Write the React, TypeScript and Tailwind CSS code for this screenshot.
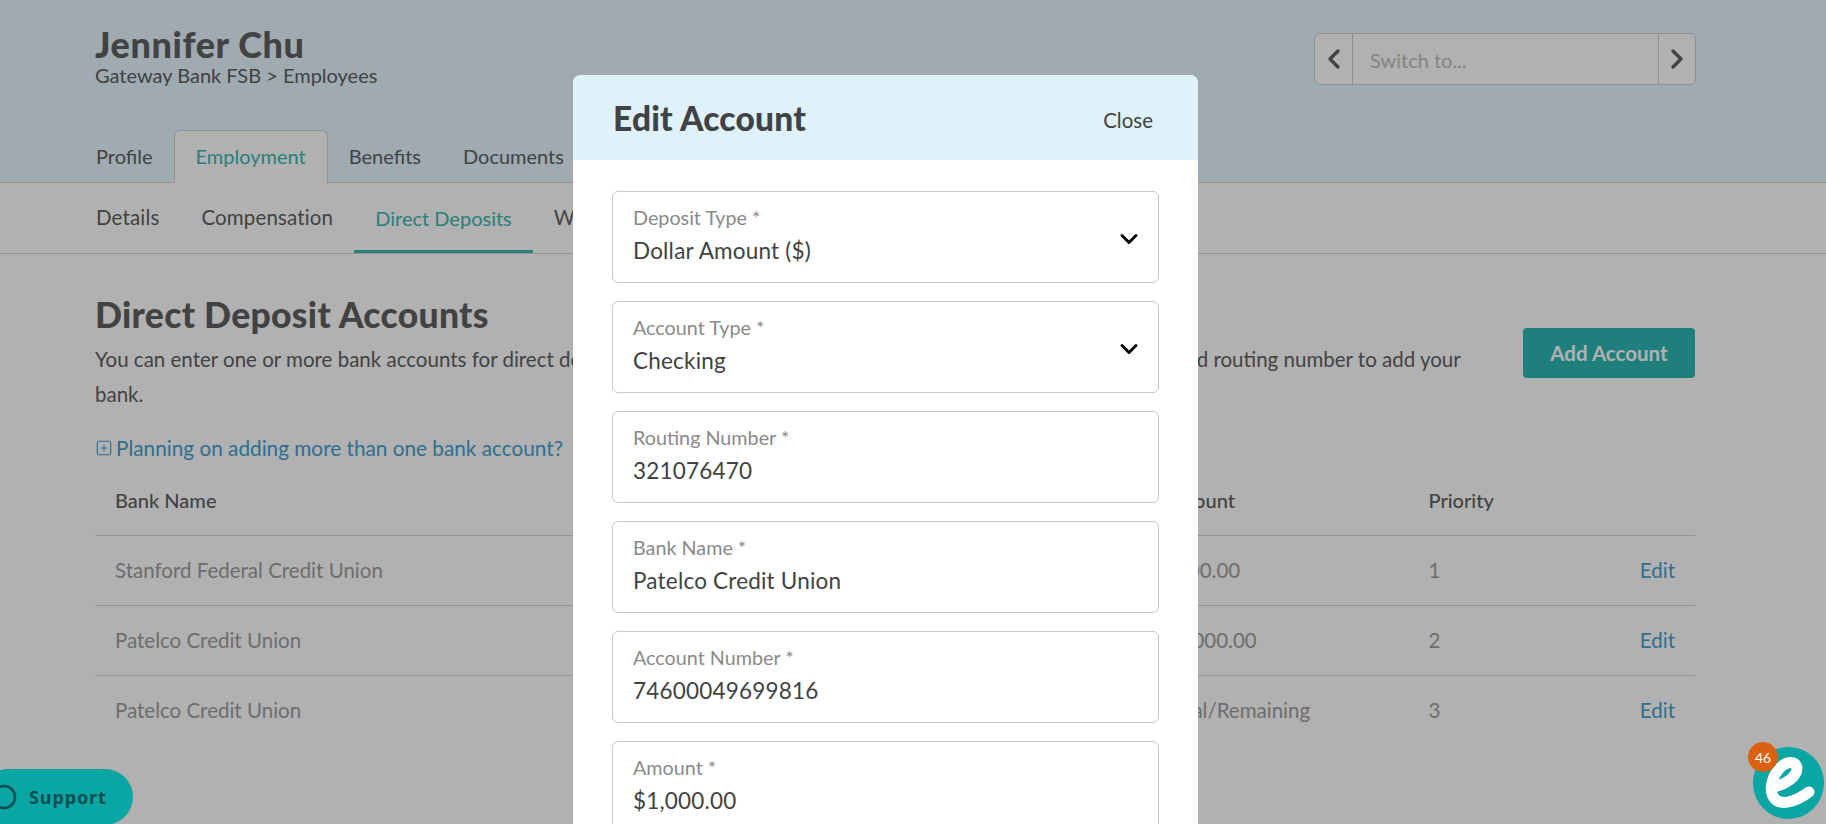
import { ChevronDown, ChevronLeft, ChevronRight, SquarePlus } from 'lucide-react';

const tabs = ['Profile', 'Employment', 'Benefits', 'Documents'];
const subTabs = ['Details', 'Compensation', 'Direct Deposits', 'W-4'];

const rows = [
  { bank: 'Stanford Federal Credit Union', amount: '$500.00', priority: '1' },
  { bank: 'Patelco Credit Union', amount: '$2,000.00', priority: '2' },
  { bank: 'Patelco Credit Union', amount: 'Total/Remaining', priority: '3' },
];

const fields = [
  { label: 'Deposit Type *', value: 'Dollar Amount ($)', select: true },
  { label: 'Account Type *', value: 'Checking', select: true },
  { label: 'Routing Number *', value: '321076470' },
  { label: 'Bank Name *', value: 'Patelco Credit Union' },
  { label: 'Account Number *', value: '74600049699816' },
  { label: 'Amount *', value: '$1,000.00' },
];

const Field = ({ label, value, select }: { label: string; value: string; select?: boolean }) => (
  <div className="relative h-[92px] shrink-0 rounded-md border border-[#c8c8c8] bg-white pl-5 pt-[14px]">
    <div className="text-[19.75px] leading-[24px] text-[#8a8a8a]">{label}</div>
    <div className="mt-[9px] text-[22.5px] leading-[24px] tracking-[0.2px] text-[#424242]">{value}</div>
    {select && <ChevronDown className="absolute right-[15px] top-[33px] h-7 w-7 text-black" strokeWidth={2.5} />}
  </div>
);

const App = () => {
  return (
    <div className="relative h-[824px] w-full overflow-hidden bg-white text-[20px] text-[#5f5f5f] font-['Lato',sans-serif]">
      <header className="h-[183px] border-b border-[#d4d4d4] bg-[#e5f6ff]">
        <div className="flex justify-between pl-[95px] pr-[130px]">
          <div className="pt-[24px]">
            <h1 className="text-[36px] leading-[40px] font-black tracking-[0.6px]">Jennifer Chu</h1>
            <p className="mt-[-1px] text-[20px] leading-[24px]">Gateway Bank FSB &gt; Employees</p>
          </div>
          <div className="mt-[33px] flex h-[52px] w-[382px] items-stretch rounded-md border border-[#d0d0d0] bg-white">
            <div className="flex w-[38px] items-center justify-center border-r border-[#d0d0d0]">
              <ChevronLeft className="h-8 w-8" strokeWidth={2.5} />
            </div>
            <div className="flex-1 pl-[17px] pt-[14px] text-[20px] leading-[24px] text-[#bdbdbd]">Switch to...</div>
            <div className="flex w-[37px] items-center justify-center border-l border-[#d0d0d0]">
              <ChevronRight className="h-8 w-8" strokeWidth={2.5} />
            </div>
          </div>
        </div>
        <nav className="flex pl-[75px] pt-[43px]">
          {tabs.map((t) => (
            <div
              key={t}
              className={
                t === 'Employment'
                  ? 'h-[53px] rounded-t-md border border-b-0 border-[#d4d4d4] bg-white px-[21px] pt-[13px] text-[20px] leading-[24px] text-[#3cb7b3]'
                  : 'h-[53px] px-[21px] pt-[14px] text-[20px] leading-[24px]'
              }
            >
              {t}
            </div>
          ))}
        </nav>
      </header>

      <nav className="flex h-[71px] border-b border-[#d4d4d4] pl-[75px]">
        {subTabs.map((t) => (
          <div
            key={t}
            className={
              t === 'Direct Deposits'
                ? 'h-[70px] border-b-[3px] border-[#3cb7b3] px-[21px] pt-[23px] text-[20px] leading-[24px] text-[#3cb7b3]'
                : 'h-[70px] px-[21px] pt-[22px] text-[20.5px] leading-[24px] tracking-[0.15px]'
            }
          >
            {t}
          </div>
        ))}
      </nav>

      <main className="pl-[95px] pr-[131px]">
        <div className="flex items-start justify-between">
          <div className="w-[1380px] pt-[40px]">
            <h2 className="text-[35.5px] leading-[42px] font-black tracking-[0.3px]">Direct Deposit Accounts</h2>
            <p className="mt-[6px] text-[20.5px] leading-[35px]">
              You can enter one or more bank accounts for direct deposit. See a check or bank statement to find your account number and routing number to add your bank.
            </p>
          </div>
          <button className="mt-[74px] h-[50px] w-[172px] rounded bg-[#2db7b4] text-[20.5px] font-bold text-white">Add Account</button>
        </div>
        <div className="mt-[24px] flex items-center gap-[3px] text-[20.75px] leading-[24px] text-[#44a0ce]">
          <SquarePlus className="h-[18px] w-[18px]" strokeWidth={1.5} />
          <span>Planning on adding more than one bank account?</span>
        </div>

        <div className="mt-[19px]">
          <div className="grid h-[57px] grid-cols-[1049px_264.5px_150px_1fr] border-b border-[#d4d4d4] px-5 pt-[9px] text-[20px] leading-[24px] font-medium">
            <div>Bank Name</div>
            <div>Amount</div>
            <div>Priority</div>
            <div />
          </div>
          {rows.map((row, i) => (
            <div
              key={i}
              className={`grid h-[70px] grid-cols-[1049px_264.5px_150px_1fr] px-5 pt-[22px] text-[20.5px] leading-[24px] text-[#9e9e9e] ${i < 2 ? 'border-b border-[#d4d4d4]' : ''}`}
            >
              <div>{row.bank}</div>
              <div>{row.amount}</div>
              <div>{row.priority}</div>
              <div className="text-right text-[#44a0ce]">Edit</div>
            </div>
          ))}
        </div>
      </main>

      {/* dimmed backdrop + modal */}
      <div className="absolute inset-0 overflow-hidden bg-black/[0.305] pl-[573px]">
        <div className="mt-[75px] h-[800px] w-[625px] rounded-t-lg bg-white">
          <div className="flex h-[85px] items-center justify-between rounded-t-lg bg-[#dff2fa] pl-[40px] pr-[45px]">
            <h3 className="mt-[2px] text-[33.5px] font-black tracking-[0.2px] text-[#414245]">Edit Account</h3>
            <button className="mt-[5px] text-[20.5px] text-[#424242]">Close</button>
          </div>
          <div className="flex flex-col gap-[18px] px-[39px] pt-[31px]">
            {fields.map((f) => (
              <Field key={f.label} {...f} />
            ))}
          </div>
        </div>
      </div>

      {/* support tab */}
      <div className="absolute left-[-20px] top-[769px] flex h-[56px] w-[153px] items-center rounded-full bg-[#0aa6a3] pl-[11px] font-['Noto_Sans',sans-serif] text-[18px] font-bold tracking-[0.9px] text-[#0b4f52]">
        <svg viewBox="0 0 26 26" className="h-[26px] w-[26px]" fill="none" stroke="currentColor" strokeWidth="2.6">
          <path d="M5 21c-2-2.200-3-4.800-3-8C2 7 6.800 2 13 2s11 5 11 11-4.800 11-11 11c-2 0-3.800-.4-5.500-1.300L3 24" />
        </svg>
        <span className="ml-[12px]">Support</span>
      </div>

      {/* e badge */}
      <div className="absolute left-[1753px] top-[747px] h-[72px] w-[71px] rounded-full bg-[#0aa6a3]">
        <svg viewBox="0 0 71 72" className="h-full w-full" fill="none" stroke="white" strokeWidth="11" strokeLinecap="round">
          <path d="M20 40C32 38 44 30 44 21 43 13 33 14 26 22 18 31 15 46 23 53c8 6 22 0 33-8" />
        </svg>
      </div>
      <div className="absolute left-[1748px] top-[742px] flex h-[30px] w-[30px] items-center justify-center rounded-full bg-[#d9610f] text-[14px] text-white">
        46
      </div>
    </div>
  );
};

export default App;
